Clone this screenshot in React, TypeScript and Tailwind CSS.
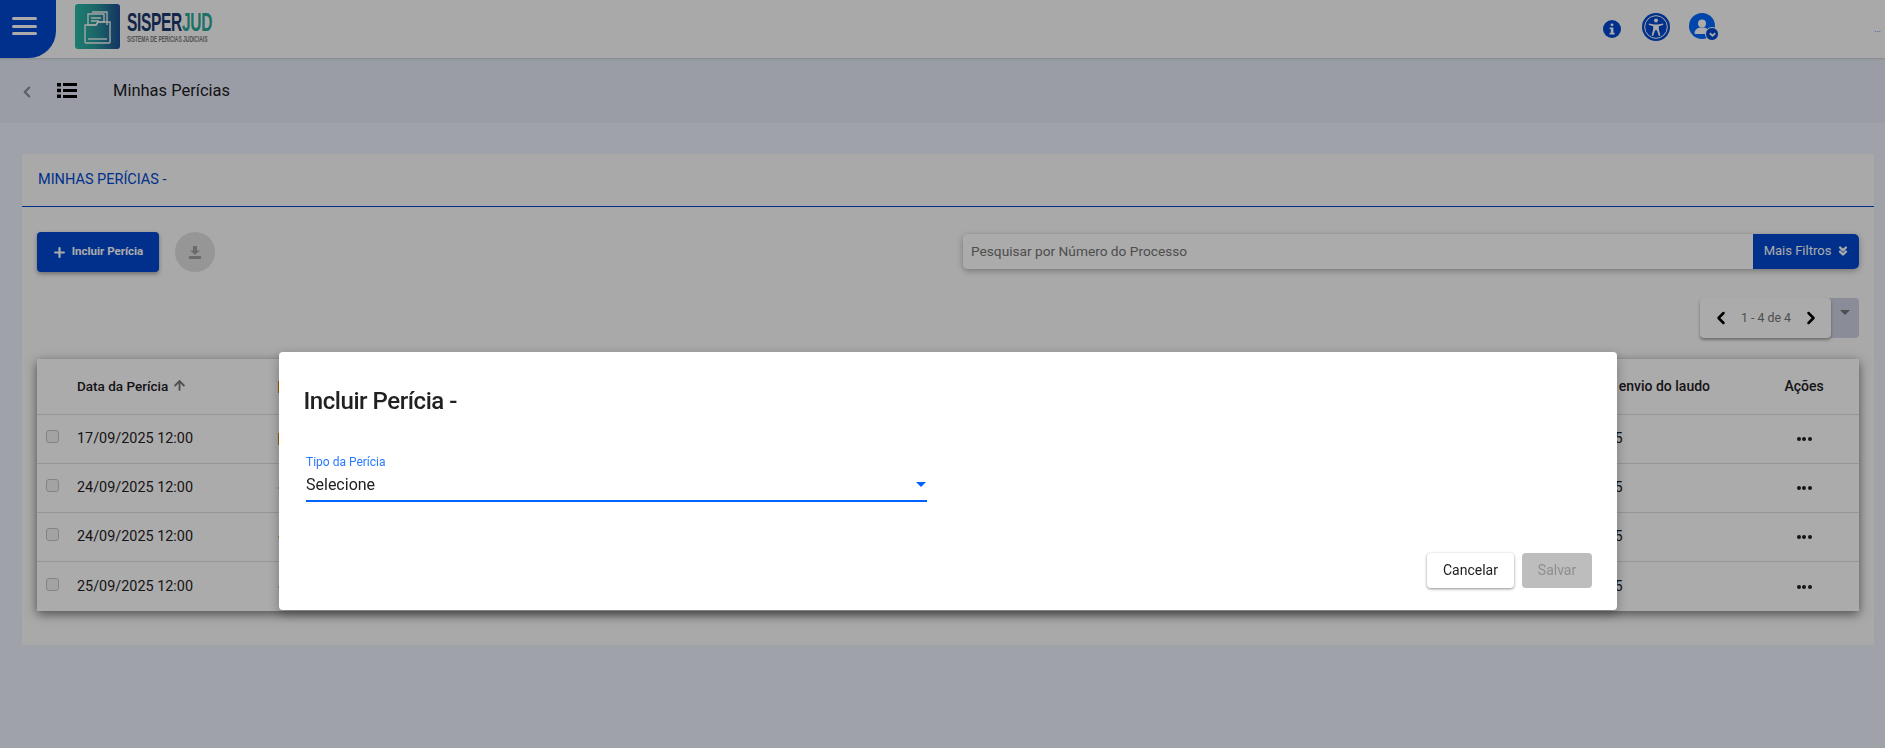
import React from 'react';
import { ChevronLeft, ChevronRight, ChevronsDown, Plus, ArrowUp } from 'lucide-react';

interface PericiaRow {
  id: number;
  data: string;
  marker: string;
}

const rows: PericiaRow[] = [
  { id: 1, data: '17/09/2025 12:00', marker: 'h-[12px] bg-[#e08a00]' },
  { id: 2, data: '24/09/2025 12:00', marker: 'h-[2px] bg-[#e8c060]' },
  { id: 3, data: '24/09/2025 12:00', marker: 'h-[2px] bg-[#e8c060]' },
  { id: 4, data: '25/09/2025 12:00', marker: 'h-[2px] bg-[#e8c060]' },
];

const LogoMark = () => (
  <svg viewBox="0 0 45 45" className="w-[45px] h-[45px] shrink-0">
    <defs>
      <linearGradient id="logoGrad" x1="0" y1="0" x2="1" y2="0">
        <stop offset="0" stopColor="#2abaa7" />
        <stop offset="0.4" stopColor="#2a9f9c" />
        <stop offset="1" stopColor="#1f4f94" />
      </linearGradient>
    </defs>
    <rect width="45" height="45" rx="3" fill="url(#logoGrad)" />
    <g fill="none" stroke="#f2f6f6" strokeWidth="1.4">
      <path d="M17 8h15v13" />
      <path d="M13 10h16v8h-6l-2 3h-8z" />
      <path d="M16 14h10M16 17h8" />
      <path d="M10 21h11l2-3h12v20a1 1 0 0 1-1 1H11a1 1 0 0 1-1-1z" />
      <path d="M13 35h19" />
    </g>
  </svg>
);

const TopBar = () => (
  <header className="h-[58px] bg-[#fcfcfc] flex items-center relative shrink-0 shadow-sm">
    <button className="w-[56px] h-[58px] bg-[#0048cf] rounded-br-[27px] flex flex-col items-center justify-center gap-[4.5px] pr-[7px] pb-[6px]">
      <span className="block w-[25px] h-[3px] rounded bg-white" />
      <span className="block w-[25px] h-[3px] rounded bg-white" />
      <span className="block w-[25px] h-[3px] rounded bg-white" />
    </button>
    <div className="flex items-center ml-[19px] gap-[7px] pb-[5px]">
      <LogoMark />
      <div className="flex flex-col">
        <div className="text-[25px] leading-[25px] font-bold tracking-[-0.5px] font-['Liberation_Sans',sans-serif] scale-x-[0.62] origin-left whitespace-nowrap">
          <span className="text-[#1b3a6e]">SISPER</span>
          <span className="text-[#2ba795]">JUD</span>
        </div>
        <div className="text-[9.5px] leading-[8px] font-bold text-[#777] font-['Liberation_Sans',sans-serif] scale-x-[0.52] origin-left whitespace-nowrap">
          SISTEMA DE PERÍCIAS JUDICIAIS
        </div>
      </div>
    </div>
    <div className="ml-auto flex items-center pr-[4px]">
      <svg viewBox="0 0 18 18" className="w-[18px] h-[18px] mr-[21px]">
        <circle cx="9" cy="9" r="9" fill="#0048cf" />
        <rect x="7.600" y="3.400" width="2.800" height="2.600" rx="1" fill="#fff" />
        <path d="M6.600 7.400h3.800v5.400h1.200v1.600H6.600v-1.600h1.200V9H6.600z" fill="#fff" />
      </svg>
      <svg viewBox="0 0 28 28" className="w-[28px] h-[28px] mr-[19px] mb-[4px]">
        <circle cx="14" cy="14" r="14" fill="#0048cf" />
        <circle cx="14" cy="14" r="11.300" fill="none" stroke="#fff" strokeWidth="1" />
        <circle cx="14" cy="7.600" r="2" fill="#fff" />
        <path d="M7 10.400l5 1.200h4l5-1.200.4 1.400-4.600 1.500v3l1.600 6.200-1.500.4-2-5.600h-1.800l-2 5.600-1.500-.4 1.600-6.200v-3l-4.600-1.500z" fill="#fff" />
      </svg>
      <div className="relative w-[32px] h-[28px] mr-[153px]">
        <svg viewBox="0 0 26 26" className="absolute left-0 top-[-2px] w-[26px] h-[26px]">
          <circle cx="13" cy="13" r="13" fill="#0067ff" />
          <circle cx="13" cy="10.500" r="4" fill="#fff" />
          <path d="M5.600 20c0-3.500 3-5.500 7.400-5.500s7.400 2 7.400 5.500v1H5.600z" fill="#fff" />
        </svg>
        <span className="absolute left-[16.5px] top-[12px] w-[14px] h-[14px] rounded-full bg-[#0048cf] border border-white flex items-center justify-center">
          <svg viewBox="0 0 10 10" className="w-[9px] h-[9px]">
            <path d="M2 3.600l3 2.800 3-2.800" fill="none" stroke="#fff" strokeWidth="2" />
          </svg>
        </span>
      </div>
      <span className="text-[9px] leading-none text-[#1976ff] mt-[1px]">...</span>
    </div>
  </header>
);

const SubBar = () => (
  <div className="h-[65px] bg-[#e6ebf6] flex items-center shrink-0">
    <ChevronLeft className="w-[18px] h-[18px] ml-[18px] mt-[3px] text-[#8a8e98]" strokeWidth={3} />
    <svg viewBox="0 0 20 15" className="w-[20px] h-[15px] ml-[21px]">
      <path d="M0 0h4v3.500H0zM0 5.800h4v3.500H0zM0 11.500h4V15H0zM6 0h14v3H6zM6 6h14v3H6zM6 12h14v3H6z" fill="#000" />
    </svg>
    <span className="ml-[36px] pt-[1px] text-[16.5px] text-[#1f2024]">Minhas Perícias</span>
  </div>
);

const Toolbar = () => (
  <div className="flex items-start justify-between mt-[25px]">
    <div className="flex items-center gap-[16px]">
      <button className="w-[122px] h-[40px] rounded-[4px] bg-[#0048cf] text-white flex items-center justify-center gap-[5px] pr-[1px] text-[11.5px] font-bold shadow-[0_2px_4px_rgba(0,0,0,0.35)]">
        <Plus className="w-[15px] h-[15px]" strokeWidth={3.5} />
        Incluir Perícia
      </button>
      <div className="w-[40px] h-[40px] rounded-full bg-[#e0e0e0] flex items-center justify-center">
        <svg viewBox="0 0 14 14" className="w-[14px] h-[14px]">
          <path d="M5 1h4v4.500h3L7 9.800 2 5.500h3zM1 11h12v3H1z" fill="#a0a0a0" />
        </svg>
      </div>
    </div>
    <div className="flex h-[35px] mt-[2px] w-[896px] rounded-[5px] shadow-[0_2px_6px_rgba(0,0,0,0.3)]">
      <div className="flex-1 bg-white rounded-l-[5px] flex items-center pl-[8px] pb-[1px] text-[13.7px] text-[#757575]">
        Pesquisar por Número do Processo
      </div>
      <button className="w-[106px] bg-[#0048cf] text-white rounded-r-[5px] flex items-center justify-center gap-[5px] pl-[2px] pb-[1px] text-[13px]">
        Mais Filtros
        <ChevronsDown className="w-[14px] h-[14px]" strokeWidth={4} />
      </button>
    </div>
  </div>
);

const Paginator = () => (
  <div className="flex justify-end mt-[26px]">
    <div className="relative w-[159px] h-[40px] rounded-[4px] bg-[#ced3e2] flex justify-end">
      <div className="w-[28px] flex justify-center pt-[12px]">
        <span className="block w-0 h-0 border-x-[5px] border-x-transparent border-t-[5px] border-t-[#757575]" />
      </div>
      <div className="absolute left-0 top-0 w-[131px] h-[40px] rounded-[4px] bg-white shadow-[0_2px_3px_rgba(0,0,0,0.35)] flex items-center justify-between pl-[11px] pr-[10px] text-[12.3px] text-[#757575]">
        <ChevronLeft className="w-[20px] h-[20px] text-black" strokeWidth={3} />
        <span>1 - 4 de 4</span>
        <ChevronRight className="w-[20px] h-[20px] text-black" strokeWidth={3} />
      </div>
    </div>
  </div>
);

const DataTable = () => (
  <div className="mt-[21px] bg-white shadow-[0_3px_10px_rgba(0,0,0,0.55)]">
    <div className="h-[56px] flex items-center border-b border-[#e0e0e0] text-[14px] font-medium text-[#1f2024]">
      <div className="w-[40px]" />
      <div className="w-[201px] flex items-center gap-[4px] text-[13.5px]">
        Data da Perícia
        <ArrowUp className="w-[15px] h-[15px] text-[#757575] mb-[2px]" strokeWidth={3} />
      </div>
      <div className="flex-1">
        <span className="block w-[2px] h-[12px] bg-[#e08a00]" />
      </div>
      <div className="w-[189px] pr-[33px] text-right whitespace-nowrap">Data de envio do laudo</div>
      <div className="w-[116px] text-center pl-[6px]">Ações</div>
    </div>
    {rows.map((row) => (
      <div key={row.id} className="h-[49px] flex items-center border-b border-[#e0e0e0] last:border-b-0 text-[14.4px] text-[#1f2024]">
        <div className="w-[40px] pl-[9px] pb-[5px]">
          <span className="block w-[13px] h-[13px] rounded-[3px] border border-[#c4c4c4] bg-[#f4f4f4]" />
        </div>
        <div className="w-[201px]">{row.data}</div>
        <div className="flex-1">
          <span className={`block w-[2px] ${row.marker}`} />
        </div>
        <div className="w-[197px]">25/09/2025</div>
        <div className="w-[116px] flex justify-center gap-[1.5px] pl-[6px]">
          <span className="w-[4px] h-[4px] rounded-full bg-[#1f2024]" />
          <span className="w-[4px] h-[4px] rounded-full bg-[#1f2024]" />
          <span className="w-[4px] h-[4px] rounded-full bg-[#1f2024]" />
        </div>
      </div>
    ))}
  </div>
);

const IncluirPericiaModal = () => (
  <div className="fixed inset-0 bg-black/[.33]">
    <div className="absolute left-[279px] top-[352px] w-[1338px] h-[258px] bg-white rounded-[4px] px-[25px] pt-[35px] shadow-[0_4px_12px_rgba(0,0,0,0.3)] flex flex-col">
      <h2 className="text-[24px] leading-[28px] font-medium text-[#212121] tracking-[-0.45px] -ml-[0.5px]">Incluir Perícia -</h2>
      <div className="w-[621px] mt-[40px] ml-[2px]">
        <label className="block text-[12px] leading-[14px] text-[#2979ff]">Tipo da Perícia</label>
        <div className="flex items-center justify-between h-[33px] border-b-2 border-[#0062ff] text-[16px] text-[#212121]">
          <span>Selecione</span>
          <span className="block w-0 h-0 mr-[1px] border-x-[5px] border-x-transparent border-t-[5px] border-t-[#0062ff]" />
        </div>
      </div>
      <div className="mt-auto mb-[22px] flex justify-end gap-[8px]">
        <button className="w-[87px] h-[35px] rounded-[4px] bg-white text-[14px] text-[#212121] shadow-[0_1px_3px_rgba(0,0,0,0.45)]">Cancelar</button>
        <button disabled className="w-[70px] h-[35px] rounded-[4px] bg-[#bdbdbd] text-[14px] text-[#8e8e8e]">Salvar</button>
      </div>
    </div>
  </div>
);

export default function App() {
  return (
    <div className="h-[748px] overflow-hidden bg-[#edf3fd] flex flex-col font-['Roboto',sans-serif]">
      <TopBar />
      <SubBar />
      <main className="mt-[31px] mr-[11px] ml-[22px] h-[491px] bg-[#fcfcfc]">
        <div className="h-[53px] border-b border-[#0048cf] flex items-center pl-[16px] pb-[1px] text-[14.5px] text-[#0048cf]">
          MINHAS PERÍCIAS -
        </div>
        <div className="px-[15px]">
          <Toolbar />
          <Paginator />
          <DataTable />
        </div>
      </main>
      <IncluirPericiaModal />
    </div>
  );
}
